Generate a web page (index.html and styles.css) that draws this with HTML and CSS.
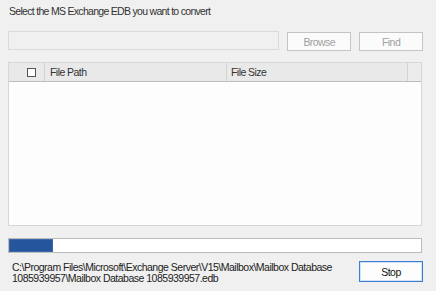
FILE: index.html
```html
<!DOCTYPE html>
<html>
<head>
<meta charset="utf-8">
<link rel="stylesheet" href="styles.css">
</head>
<body>
<div class="wrap">
  <div class="title">Select the MS Exchange EDB you want to convert</div>
  <div class="pick">
    <div class="path-input"></div>
    <div class="btn disabled">Browse</div>
    <div class="btn disabled">Find</div>
  </div>
  <div class="grid">
    <div class="head">
      <div class="hcell chk"><span class="box"></span></div>
      <div class="hcell fpath">File Path</div>
      <div class="hcell fsize">File Size</div>
      <div class="hcell filler"></div>
    </div>
    <div class="body"></div>
  </div>
  <div class="progress"><div class="fill" style="width:44px"></div></div>
  <div class="status">
    <div class="cur">C:\Program Files\Microsoft\Exchange Server\V15\Mailbox\Mailbox Database 1085939957\Mailbox Database 1085939957.edb</div>
    <div class="btn focus">Stop</div>
  </div>
</div>
</body>
</html>
```
FILE: styles.css
```css
html, body {
  margin: 0;
  padding: 0;
  background: #f0f0f0;
}
body {
  font-family: "Liberation Sans", Arial, sans-serif;
  font-size: 10.5px;
  letter-spacing: -0.55px;
  color: #1a1a1a;
  width: 436px;
  height: 291px;
  overflow: hidden;
}
.wrap {
  padding: 5px 13px 0 8px;
  display: flex;
  flex-direction: column;
}
.title {
  margin-left: 1px;
  height: 14px;
  line-height: 13px;
  color: #333;
  letter-spacing: -0.7px;
}
.pick {
  display: flex;
  margin-top: 12px;
  align-items: flex-start;
}
.path-input {
  width: 270px;
  height: 17px;
  border: 1px solid #dadada;
  background: #f0f0f0;
}
.btn {
  box-sizing: border-box;
  width: 64px;
  height: 19px;
  border: 1px solid #adadad;
  background: #fdfdfd;
  display: flex;
  align-items: center;
  justify-content: center;
  color: #111;
}
.pick .btn {
  margin-top: 1px;
  margin-left: 8px;
}
.btn.disabled {
  border-color: #c4c4c4;
  background: #fbfbfb;
  color: #a0a0a0;
}
.grid {
  margin-top: 11px;
  width: 414px;
  box-sizing: border-box;
  height: 164px;
  border: 1px solid #d6d6d6;
  background: #fdfdfd;
  display: flex;
  flex-direction: column;
}
.head {
  display: flex;
  height: 18px;
  background: #e9e9e9;
  border-bottom: 1px solid #bdbdbd;
}
.hcell {
  box-sizing: border-box;
  height: 18px;
  border-right: 1px solid #d2d2d2;
  display: flex;
  align-items: center;
  color: #333;
}
.chk {
  width: 36px;
  justify-content: flex-end;
  padding-right: 8px;
}
.box {
  width: 7px;
  height: 7px;
  border: 1px solid #555;
  background: #fff;
}
.fpath {
  width: 182px;
  padding-left: 5px;
}
.fsize {
  width: 181px;
  padding-left: 4px;
}
.filler {
  flex: 1;
  border-right: none;
  background: #ececec;
}
.body {
  flex: 1;
}
.progress {
  margin-top: 12px;
  width: 414px;
  height: 15px;
  box-sizing: border-box;
  border: 1px solid #bcbcbc;
  background: #fff;
}
.fill {
  height: 13px;
  background: #25569d;
  box-shadow: inset 0 0 0 1px #3b68a8;
}
.status {
  display: flex;
  justify-content: space-between;
  align-items: flex-start;
  margin-top: 7px;
}
.cur {
  width: 335px;
  margin-left: 4px;
  line-height: 11px;
  margin-top: 2px;
  color: #222;
  letter-spacing: -0.5px;
}
.btn.focus {
  width: 64px;
  height: 21px;
  border: 1px solid #3c7fd1;
  box-shadow: inset 0 0 0 1px #cfe2f7;
  margin-top: 1px;
}
```
